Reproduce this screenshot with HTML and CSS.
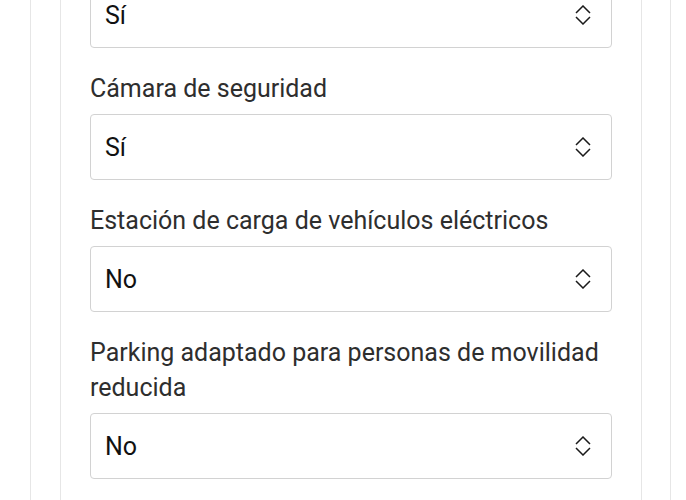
FILE: index.html
```html
<!DOCTYPE html>
<html lang="es">
<head>
    <meta charset="UTF-8">
    <meta name="viewport" content="width=device-width, initial-scale=1.0">
    <title>Equipamiento del parking</title>
    <link rel="stylesheet" href="styles.css">
</head>
<body>
    <div class="page">
        <div class="card">
            <form class="form">
                <div class="field">
                    <label for="vigilancia">Vigilancia</label>
                    <div class="select-wrap">
                        <select id="vigilancia">
                            <option>Sí</option>
                            <option>No</option>
                        </select>
                        <svg class="chevrons" viewBox="0 0 16 20" width="16" height="20"><path d="M1 8 L8 1 L15 8 M1 12 L8 19 L15 12"/></svg>
                    </div>
                </div>

                <div class="field">
                    <label for="camara">Cámara de seguridad</label>
                    <div class="select-wrap">
                        <select id="camara">
                            <option>Sí</option>
                            <option>No</option>
                        </select>
                        <svg class="chevrons" viewBox="0 0 16 20" width="16" height="20"><path d="M1 8 L8 1 L15 8 M1 12 L8 19 L15 12"/></svg>
                    </div>
                </div>

                <div class="field">
                    <label for="carga">Estación de carga de vehículos eléctricos</label>
                    <div class="select-wrap">
                        <select id="carga">
                            <option>No</option>
                            <option>Sí</option>
                        </select>
                        <svg class="chevrons" viewBox="0 0 16 20" width="16" height="20"><path d="M1 8 L8 1 L15 8 M1 12 L8 19 L15 12"/></svg>
                    </div>
                </div>

                <div class="field">
                    <label for="adaptado">Parking adaptado para personas de movilidad reducida</label>
                    <div class="select-wrap">
                        <select id="adaptado">
                            <option>No</option>
                            <option>Sí</option>
                        </select>
                        <svg class="chevrons" viewBox="0 0 16 20" width="16" height="20"><path d="M1 8 L8 1 L15 8 M1 12 L8 19 L15 12"/></svg>
                    </div>
                </div>
            </form>
        </div>
    </div>
</body>
</html>
```

FILE: styles.css
```css
body {
    margin: 0;
    background: white;
    font-family: Roboto, "Noto Sans", Arial, sans-serif;
    color: #2e2e2e;
}
.page {
    margin: -61px 15px 0 30px;
    padding: 0 28px 0 29px;
    border-left: 1px solid #e6e6e6;
    border-right: 1px solid #e6e6e6;
}
.card {
    padding: 0 29px 120px 29px;
    border-left: 1px solid #e6e6e6;
    border-right: 1px solid #e6e6e6;
}
.form {
    display: flex;
    flex-direction: column;
    gap: 23px;
}
.field label {
    display: block;
    font-size: 25px;
    line-height: 35px;
    margin-bottom: 8px;
}
.select-wrap {
    position: relative;
}
.select-wrap select {
    display: block;
    width: 100%;
    height: 66px;
    padding: 0 50px 0 14px;
    appearance: none;
    -webkit-appearance: none;
    background: white;
    border: 1px solid #d2d2d2;
    border-radius: 4px;
    font-family: inherit;
    font-size: 25px;
    color: #111;
}
.chevrons {
    position: absolute;
    right: 21px;
    top: 23px;
    fill: none;
    stroke: #1a1a1a;
    stroke-width: 1.5;
    pointer-events: none;
}
```
